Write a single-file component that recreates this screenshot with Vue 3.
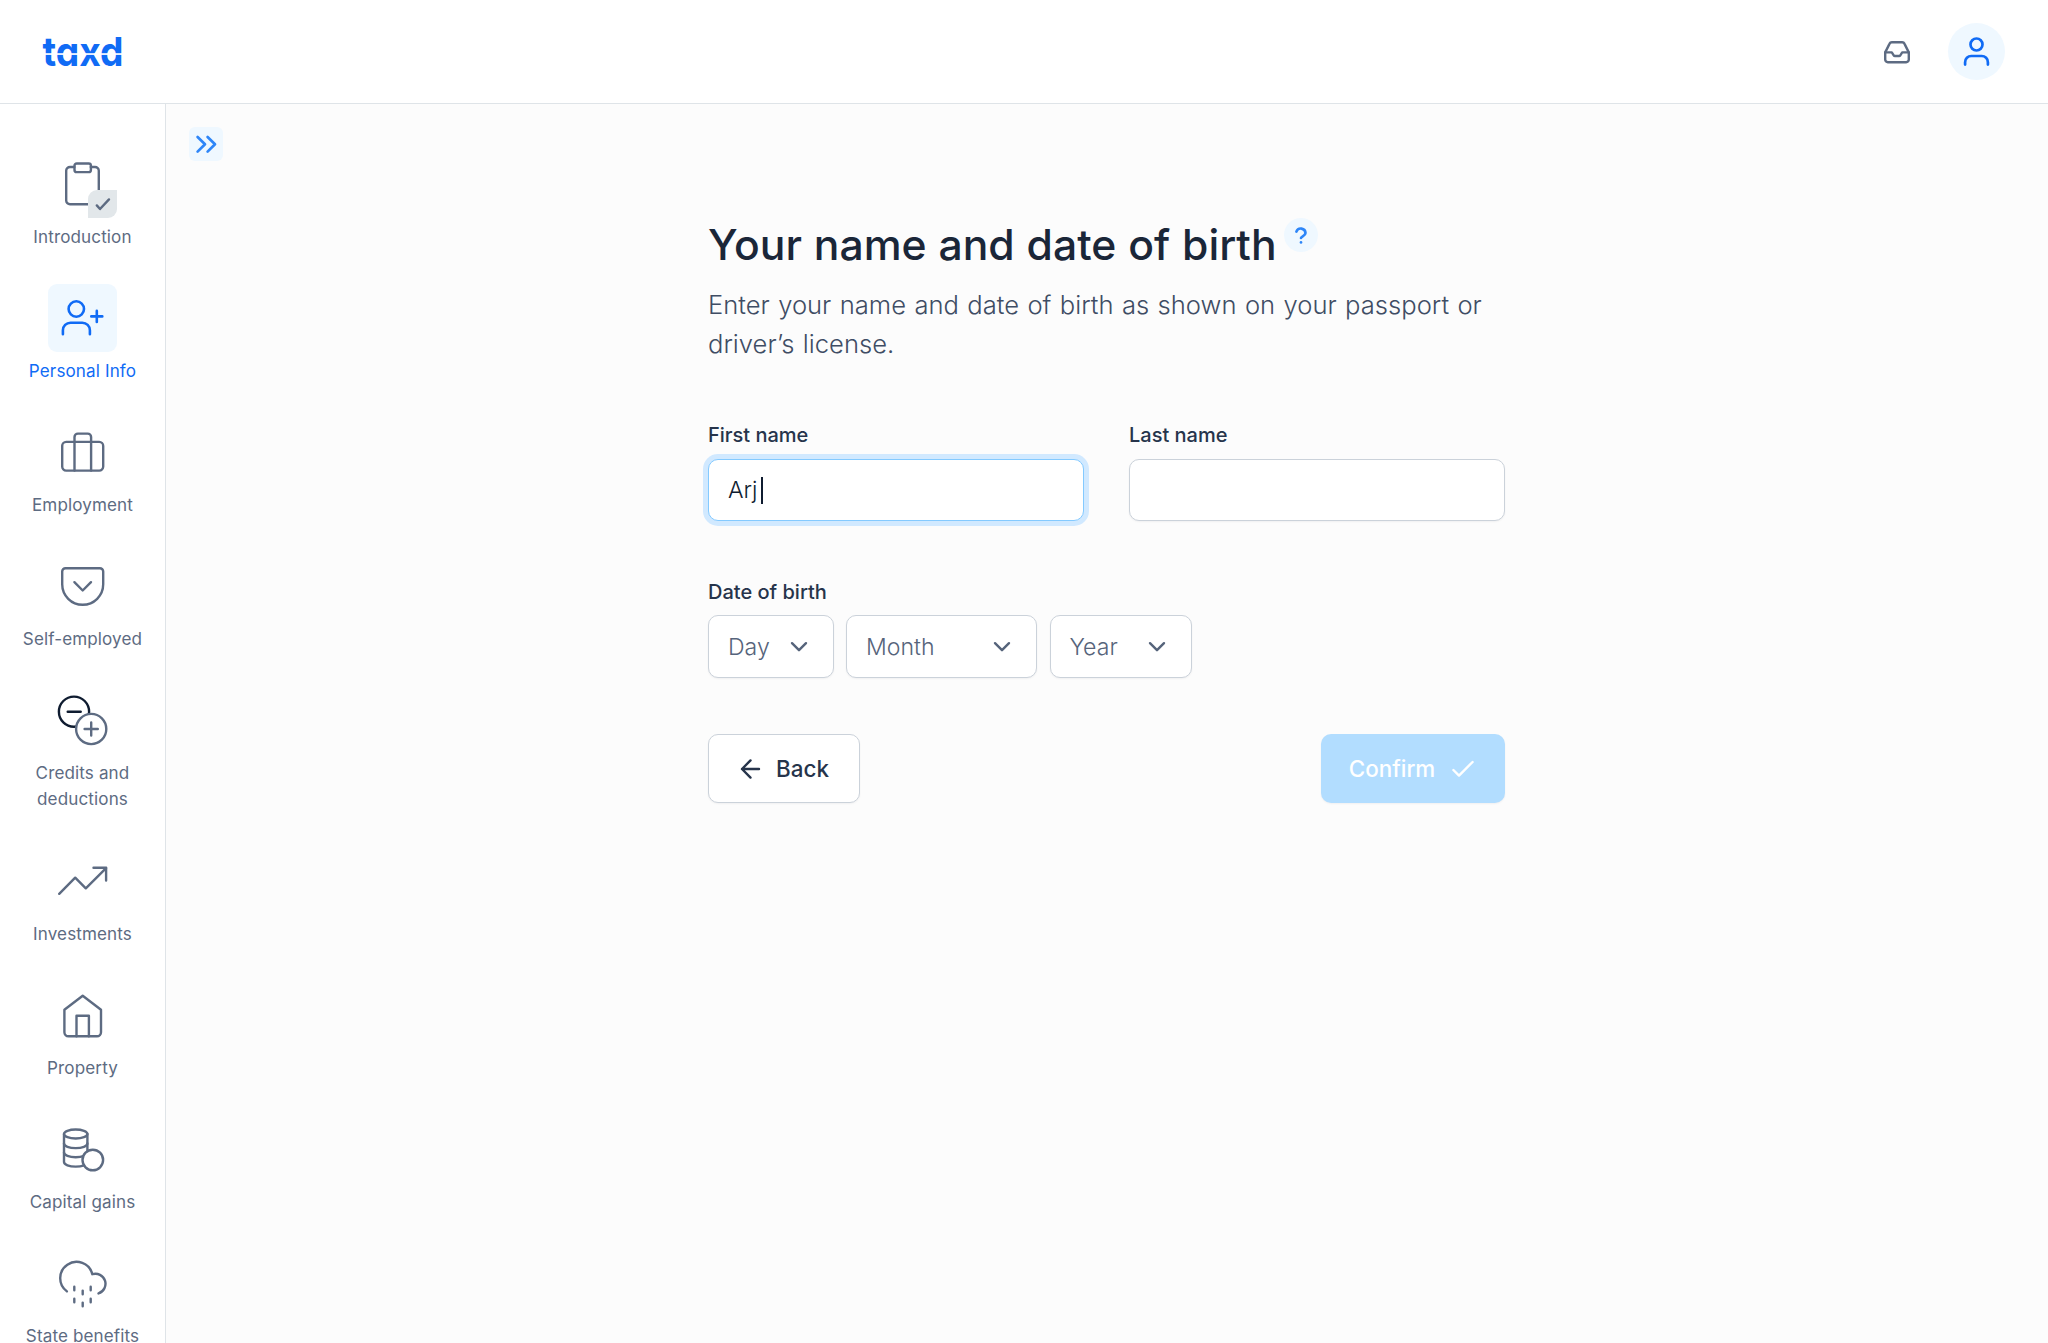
<template>
  <div class="app">
    <header class="topbar">
      <svg class="logo" width="82" height="34" viewBox="0 0 82 34" role="img" aria-label="taxd">
        <text class="logo-text" x="0.5" y="30.6" textLength="81" lengthAdjust="spacingAndGlyphs">taxd</text>
        <rect x="0" y="18.2" width="82" height="1.7" fill="#fff" />
      </svg>
      <div class="topbar-actions">
        <button type="button" class="inbox" aria-label="Inbox">
          <svg width="28" height="24" viewBox="0 0 28 24">
            <path d="M2.2 12.4 6.6 3.6a2.4 2.4 0 0 1 2.2-1.4h10.4a2.4 2.4 0 0 1 2.2 1.4l4.4 8.8v7.2a2.6 2.6 0 0 1-2.6 2.6H4.8a2.6 2.6 0 0 1-2.6-2.6Z" />
            <path d="M2.2 12.4h6.6l1.9 2.9c.3.5.7.7 1.2.7h4.2c.5 0 .9-.2 1.2-.7l1.9-2.9h6.6" />
          </svg>
        </button>
        <button type="button" class="avatar" aria-label="Account">
          <svg width="57" height="57" viewBox="0 0 57 57">
            <circle cx="28.5" cy="21.5" r="6" />
            <path d="M17.1 41.6v-2.4a6.2 6.2 0 0 1 6.2-6.2h10.4a6.2 6.2 0 0 1 6.2 6.2v2.4" />
          </svg>
        </button>
      </div>
    </header>

    <div class="body">
      <nav class="sidebar">
        <a
          v-for="item in items"
          :key="item.id"
          class="nav-item"
          :class="{ active: item.id === activeId }"
          @click="activeId = item.id"
        >
          <span class="nav-icon">
            <svg width="69" height="68" viewBox="-0.5 0 69 68">
              <template v-if="item.id === 'introduction'">
                <path d="M25.8 17h-4.3a3.8 3.8 0 0 0-3.8 3.8v29.7a3.8 3.8 0 0 0 3.8 3.8h25a3.8 3.8 0 0 0 3.8-3.8V20.8a3.8 3.8 0 0 0-3.8-3.8h-4.2" />
                <rect x="26" y="13.5" width="16.4" height="8.6" rx="2.2" />
              </template>
              <template v-else-if="item.id === 'personal'">
                <circle cx="27.8" cy="25" r="7.7" />
                <path d="M14.4 50.3v-4a7.6 7.6 0 0 1 7.6-7.6h11.8a7.6 7.6 0 0 1 7.6 7.6v4" />
                <path d="M42.8 32.4h11M48.3 26.9v11" />
              </template>
              <template v-else-if="item.id === 'employment'">
                <rect x="13.7" y="23.9" width="41" height="28.7" rx="4" />
                <path d="M26 52.6V19a3.4 3.4 0 0 1 3.4-3.4h9.8a3.4 3.4 0 0 1 3.4 3.4v33.6" />
              </template>
              <template v-else-if="item.id === 'self'">
                <path d="M17 16.2h34.4a3.3 3.3 0 0 1 3.3 3.3v12.8a20.5 20.5 0 0 1-41 0V19.5a3.3 3.3 0 0 1 3.3-3.3Z" />
                <path d="m25.9 30.2 8.3 8.3 8.3-8.3" />
              </template>
              <template v-else-if="item.id === 'credits'">
                <g class="dark">
                  <circle cx="25.5" cy="25.7" r="15.1" />
                  <path d="M19.2 25.7h13" />
                </g>
                <circle cx="42.7" cy="43" r="15.1" fill="#fff" />
                <path d="M36.1 43h13.2M42.7 36.4v13.2" />
              </template>
              <template v-else-if="item.id === 'investments'">
                <path d="m10.7 47.8 16-16.1 10.6 10.6 20.3-20.2" />
                <path d="M45 21.7h12.6v12.9" />
              </template>
              <template v-else-if="item.id === 'property'">
                <path d="m34.2 14.8 18.3 13.9v22.6a4 4 0 0 1-4 4H19.9a4 4 0 0 1-4-4V28.7Z" />
                <path d="M28 55.3V34.8h12.4v20.5" />
              </template>
              <template v-else-if="item.id === 'capital'">
                <ellipse cx="27.2" cy="19" rx="11.7" ry="4.5" />
                <path d="M15.5 19v28c0 2.6 5.2 4.6 11.7 4.6s11.7-2 11.7-4.6V19" />
                <path d="M15.5 28.5c0 2.6 5.2 4.6 11.7 4.6s11.7-2 11.7-4.6M15.5 37.6c0 2.6 5.2 4.6 11.7 4.6s11.7-2 11.7-4.6" />
                <circle cx="44.3" cy="45" r="10.3" fill="#fff" />
              </template>
              <template v-else>
                <path d="M18.4 42.4A16.3 16.3 0 1 1 43.8 25.2 10 10 0 1 1 50 44.4" />
                <path d="M25.8 37.7v3.6M34.2 41.6v3.6M42.2 37.7v3.6M25.8 49.7v3.6M34.2 53.6v3.6M42.2 49.7v3.6" />
              </template>
            </svg>
            <span v-if="item.done" class="done">
              <svg width="29" height="28" viewBox="0 0 29 28">
                <path d="m8.8 15.4 3.2 3.6 9-9.6" />
              </svg>
            </span>
          </span>
          <span class="nav-label">{{ item.label }}</span>
        </a>
      </nav>

      <main class="main">
        <button type="button" class="expand" aria-label="Expand">
          <svg width="34" height="34" viewBox="0 0 34 34">
            <path d="m8.6 10 7.4 7.3-7.4 7.3M18.6 10l7.4 7.3-7.4 7.3" />
          </svg>
        </button>

        <form class="form" @submit.prevent>
          <div class="title-row">
            <h1>Your name and date of birth</h1>
            <span class="help">
              <svg width="34" height="34" viewBox="0 0 34 34">
                <path d="M12.4 13.6a4.7 4.7 0 0 1 9.1 1.4c0 3-4.5 3.4-4.5 5" />
                <path d="M17 24.3v.1" />
              </svg>
            </span>
          </div>
          <p class="intro">Enter your name and date of birth as shown on your passport or driver’s license.</p>

          <div class="names">
            <div class="field">
              <label>First name</label>
              <div class="control focused">{{ firstName }}<i class="caret"></i></div>
            </div>
            <div class="field">
              <label for="lastName">Last name</label>
              <input id="lastName" v-model="lastName" class="control" type="text" />
            </div>
          </div>

          <div class="field birth">
            <label>Date of birth</label>
            <div class="selects">
              <div v-for="part in dateParts" :key="part" class="control select" :class="part.toLowerCase()">
                <span>{{ part }}</span>
                <svg width="20" height="14" viewBox="0 0 20 14">
                  <path d="m3 3.2 7 7 7-7" />
                </svg>
              </div>
            </div>
          </div>

          <div class="actions">
            <button type="button" class="btn btn-back">
              <svg width="22" height="22" viewBox="0 0 22 22">
                <path d="M20 11H3M11.5 2.4 3 11l8.5 8.6" />
              </svg>
              Back
            </button>
            <button type="submit" class="btn btn-confirm" disabled>
              Confirm
              <svg width="24" height="20" viewBox="0 0 24 20">
                <path d="m2.4 11 5.6 5.6L21.6 3" />
              </svg>
            </button>
          </div>
        </form>
      </main>
    </div>
  </div>
</template>

<script setup>
import { ref } from 'vue'

const items = [
  { id: 'introduction', label: 'Introduction', done: true },
  { id: 'personal', label: 'Personal Info' },
  { id: 'employment', label: 'Employment' },
  { id: 'self', label: 'Self-employed' },
  { id: 'credits', label: 'Credits and deductions' },
  { id: 'investments', label: 'Investments' },
  { id: 'property', label: 'Property' },
  { id: 'capital', label: 'Capital gains' },
  { id: 'benefits', label: 'State benefits' }
]

const dateParts = ['Day', 'Month', 'Year']

const activeId = ref('personal')
const firstName = ref('Arj')
const lastName = ref('')
</script>

<style>
body {
  margin: 0;
  overflow: hidden;
}
</style>

<style scoped>
.app {
  display: flex;
  flex-direction: column;
  height: 100vh;
  overflow: hidden;
  background: #fcfcfc;
  font-family: Inter, "Liberation Sans", sans-serif;
  color: #26344b;
}

.app * {
  box-sizing: border-box;
}

svg {
  display: block;
  fill: none;
  stroke: currentColor;
  stroke-width: 2.4;
  stroke-linecap: round;
  stroke-linejoin: round;
}

button {
  padding: 0;
  border: none;
  background: none;
  font-family: inherit;
}

.topbar {
  display: flex;
  flex: none;
  align-items: center;
  justify-content: space-between;
  height: 104px;
  padding: 0 43px 0 42px;
  background: #fff;
  border-bottom: 1px solid #dfe4e8;
}

.logo {
  overflow: visible;
  stroke: none;
  fill: #106bf5;
}

.logo-text {
  font-size: 40px;
  font-weight: 700;
  font-feature-settings: "cv11";
}

.topbar-actions {
  display: flex;
  align-items: center;
  gap: 37px;
}

.inbox {
  color: #5d6b82;
}

.avatar {
  border-radius: 50%;
  background: #eff8ff;
  color: #106bf5;
}

.avatar svg {
  stroke-width: 2.7;
}

.body {
  display: flex;
  flex: 1;
  min-height: 0;
}

.sidebar {
  display: flex;
  flex: none;
  flex-direction: column;
  gap: 34px;
  width: 166px;
  padding-top: 46px;
  background: #fff;
  border-right: 1px solid #dfe4e8;
  overflow: hidden;
}

.nav-item {
  display: flex;
  flex: none;
  flex-direction: column;
  align-items: center;
  gap: 6.1px;
  color: #5d6b82;
}

.nav-icon {
  position: relative;
  width: 69px;
  height: 68px;
  border-radius: 9px;
}

.nav-label {
  width: 130px;
  font-size: 17.07px;
  line-height: 26px;
  letter-spacing: 0.007em;
  text-align: center;
}

.nav-item.active {
  color: #106bf5;
}

.active .nav-icon {
  background: #eff8ff;
}

.active svg {
  stroke-width: 2.6;
}

.dark {
  stroke: #0f1c30;
}

.done {
  position: absolute;
  right: 0;
  bottom: 0;
  border-radius: 9px 0 9px 0;
  background: #e2e7ea;
}

.main {
  flex: 1;
  padding: 23px 24px 0 23px;
}

.expand {
  display: block;
  border-radius: 6px;
  background: #eff8ff;
  color: #2e86f8;
}

.expand svg,
.help svg {
  stroke-width: 2.7;
}

.form {
  width: 797px;
  margin: 57px auto 0;
}

.title-row {
  display: flex;
  align-items: flex-start;
  gap: 7px;
}

h1 {
  margin: 0;
  font-size: 42.67px;
  font-weight: 500;
  line-height: 54px;
  word-spacing: 0.5px;
  color: #1a2638;
}

.help {
  border-radius: 50%;
  background: #eff8ff;
  color: #2e86f8;
}

.intro {
  margin: 13px 0 57px;
  font-size: 25.6px;
  font-weight: 300;
  line-height: 39.2px;
  word-spacing: 1.2px;
  color: #3f4d64;
}

.names {
  display: flex;
  gap: 45px;
}

.field {
  display: flex;
  flex: 1;
  flex-direction: column;
  gap: 7.5px;
}

.field label {
  font-size: 20px;
  font-weight: 500;
  line-height: 31px;
}

.control {
  display: flex;
  align-items: center;
  height: 62.5px;
  padding: 0 19px;
  border: 1px solid #cbd2da;
  border-radius: 10px;
  background: #fff;
  box-shadow: 0 1px 2px rgba(16, 24, 40, 0.05);
  font-size: 23.1px;
  font-weight: 300;
  color: #0f1c30;
}

.control.focused {
  border-color: #84caff;
  box-shadow: 0 0 0 5px #d1e9ff;
}

.caret {
  width: 2px;
  height: 27px;
  margin-left: 3px;
  background: #0f1c30;
}

.birth {
  margin: 55.5px 0 56.5px;
}

.selects {
  display: flex;
  gap: 12.5px;
}

.select {
  justify-content: space-between;
  padding-right: 24px;
  color: #56647b;
}

.day {
  width: 125.5px;
}

.month {
  width: 191px;
}

.year {
  width: 142.5px;
}

.actions {
  display: flex;
  justify-content: space-between;
}

.btn {
  display: flex;
  align-items: center;
  justify-content: center;
  gap: 15.5px;
  height: 68.5px;
  border-radius: 10px;
  box-shadow: 0 1px 2px rgba(16, 24, 40, 0.05);
  font-size: 22.4px;
  font-weight: 500;
}

.btn-back {
  width: 151.5px;
  border: 1px solid #cbd2da;
  background: #fff;
  color: #26344b;
}

.btn-confirm {
  width: 184.5px;
  padding-right: 2px;
  background: #b2ddff;
  color: #fff;
}
</style>
